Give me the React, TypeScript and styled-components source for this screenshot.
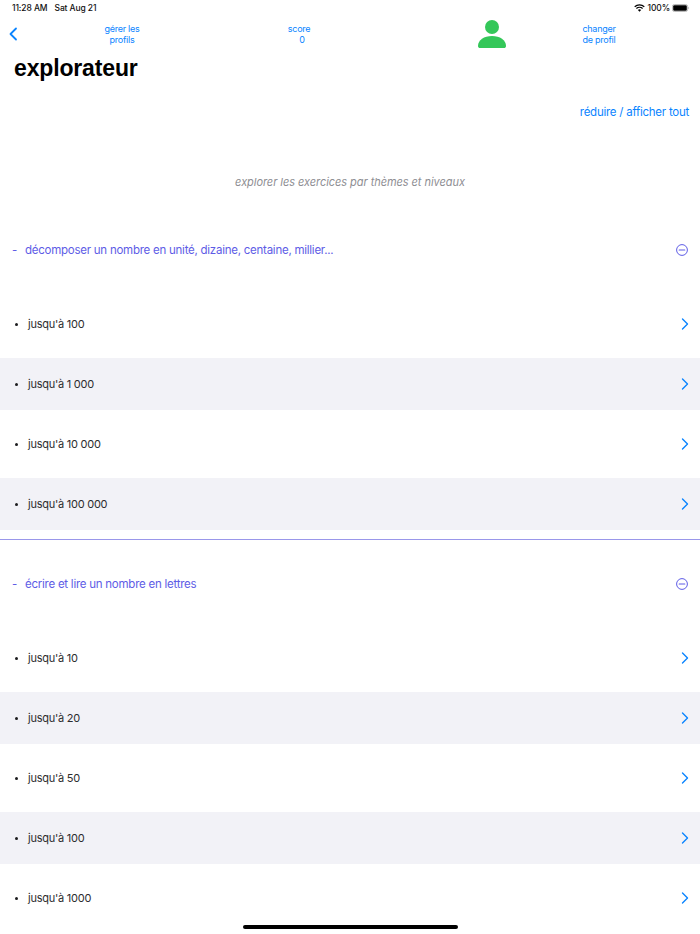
import React from "react";
import styled, { createGlobalStyle } from "styled-components";

const GlobalStyle = createGlobalStyle`
  html, body {
    margin: 0;
    padding: 0;
    background: #ffffff;
    font-family: Inter, "Liberation Sans", sans-serif;
  }
`;

const Page = styled.div`
  position: relative;
  width: 700px;
  height: 934px;
  overflow: hidden;
  background: #ffffff;
`;

const StatusBar = styled.div`
  height: 16px;
  padding: 0 10px 0 12px;
  display: flex;
  align-items: center;
  justify-content: space-between;
  font-size: 8.5px;
  font-weight: 500;
  letter-spacing: -0.1px;
  color: #111111;
`;

const StatusGroup = styled.div<{ $gap: number }>`
  display: flex;
  align-items: center;
  gap: ${(p) => p.$gap}px;
`;

const NavBar = styled.div`
  height: 33px;
  margin-top: 4px;
  display: grid;
  grid-template-columns: 74px 96px 258px 128px 86px 1fr;
  align-items: start;
`;

const BackButton = styled.div`
  padding: 7px 0 0 8px;
  display: flex;
`;

const NavLabel = styled.div`
  padding-top: 3px;
  font-size: 9px;
  line-height: 11px;
  letter-spacing: -0.25px;
  color: #0a84ff;
  text-align: center;
`;

const ScoreValue = styled.span`
  margin-left: 6px;
`;

const ProfileIcon = styled.div`
  display: flex;
  justify-content: center;
`;

const Title = styled.h1`
  margin: 0;
  padding: 0 0 0 14px;
  font-family: "Liberation Sans", Arial, sans-serif;
  font-size: 23px;
  line-height: 30px;
  font-weight: 700;
  letter-spacing: -0.15px;
  color: #000000;
`;

const ToggleAll = styled.div`
  margin-top: 21px;
  padding-right: 11px;
  text-align: right;
  font-size: 11.5px;
  line-height: 16px;
  letter-spacing: -0.25px;
  color: #0a84ff;
`;

const Subtitle = styled.div`
  margin-top: 54px;
  text-align: center;
  font-size: 11px;
  line-height: 16px;
  font-style: italic;
  letter-spacing: -0.05px;
  color: #8e8e93;
`;

const SectionHeader = styled.div<{ $top: number }>`
  margin-top: ${(p) => p.$top}px;
  margin-bottom: 20px;
  height: 40px;
  padding: 0 12px;
  display: flex;
  align-items: center;
  font-size: 11.5px;
  letter-spacing: -0.25px;
  color: #5e5ce6;
`;

const Dash = styled.span`
  width: 13px;
`;

const HeaderText = styled.span`
  flex: 1;
`;

const List = styled.div`
  display: flex;
  flex-direction: column;
`;

const Row = styled.div<{ $shaded: boolean }>`
  height: ${(p) => (p.$shaded ? 52 : 68)}px;
  padding: 0 11px 0 15px;
  display: flex;
  align-items: center;
  background: ${(p) => (p.$shaded ? "#f2f2f7" : "#ffffff")};
  font-size: 11px;
  letter-spacing: -0.25px;
  color: #2c2c2e;
`;

const Bullet = styled.span`
  width: 3px;
  height: 3px;
  margin-right: 10px;
  border-radius: 50%;
  background: #1c1c1e;
`;

const RowLabel = styled.span`
  flex: 1;
`;

const Divider = styled.div`
  height: 1px;
  margin-top: 9px;
  background: #9a97ea;
`;

const HomeIndicator = styled.div`
  position: absolute;
  left: 243px;
  bottom: 5px;
  width: 215px;
  height: 4px;
  border-radius: 2px;
  background: #000000;
`;

const Chevron = () => (
  <svg width="8" height="12" viewBox="0 0 8 12" fill="none">
    <path d="M1.5 1 L6.5 6 L1.5 11" stroke="#0a84ff" strokeWidth="1.4" strokeLinecap="round" strokeLinejoin="round" />
  </svg>
);

const MinusCircle = () => (
  <svg width="12" height="12" viewBox="0 0 12 12" fill="none">
    <circle cx="6" cy="6" r="5.4" stroke="#5e5ce6" strokeWidth="1" />
    <path d="M3.2 6 H8.8" stroke="#5e5ce6" strokeWidth="1.1" strokeLinecap="round" />
  </svg>
);

const Wifi = () => (
  <svg width="11" height="8" viewBox="0 0 11 8" fill="none">
    <path d="M0.7 2.8 A7 7 0 0 1 10.3 2.8" stroke="#000" strokeWidth="1.2" />
    <path d="M2.4 4.5 A4.5 4.5 0 0 1 8.6 4.5" stroke="#000" strokeWidth="1.2" />
    <path d="M3.9 6 L5.5 7.8 L7.1 6 A2.3 2.3 0 0 0 3.9 6 Z" fill="#000" />
  </svg>
);

const Battery = () => (
  <svg width="18" height="8" viewBox="0 0 18 8" fill="none">
    <rect x="0.4" y="0.5" width="15.2" height="7" rx="2" stroke="#aaaaaa" strokeWidth="0.8" />
    <rect x="1.2" y="1.3" width="13.6" height="5.4" rx="1.2" fill="#000" />
    <path d="M16.4 2.8 C17.4 3 17.4 5 16.4 5.2 Z" fill="#aaaaaa" />
  </svg>
);

const sections = [
  {
    title: "décomposer un nombre en unité, dizaine, centaine, millier...",
    top: 40,
    rows: ["jusqu'à 100", "jusqu'à 1 000", "jusqu'à 10 000", "jusqu'à 100 000"],
  },
  {
    title: "écrire et lire un nombre en lettres",
    top: 24,
    rows: ["jusqu'à 10", "jusqu'à 20", "jusqu'à 50", "jusqu'à 100", "jusqu'à 1000"],
  },
];

const App = () => {
  return (
    <Page>
      <GlobalStyle />
      <StatusBar>
        <StatusGroup $gap={7}>
          <span>11:28 AM</span>
          <span>Sat Aug 21</span>
        </StatusGroup>
        <StatusGroup $gap={2}>
          <Wifi />
          <span>100%</span>
          <Battery />
        </StatusGroup>
      </StatusBar>
      <NavBar>
        <BackButton>
          <svg width="10" height="14" viewBox="0 0 10 14" fill="none">
            <path d="M8 1.5 L2.5 7 L8 12.5" stroke="#0a84ff" strokeWidth="1.8" strokeLinecap="round" strokeLinejoin="round" />
          </svg>
        </BackButton>
        <NavLabel>gérer les<br />profils</NavLabel>
        <NavLabel>score<br /><ScoreValue>0</ScoreValue></NavLabel>
        <ProfileIcon>
          <svg width="28" height="28" viewBox="0 0 28 28">
            <circle cx="14" cy="7" r="7" fill="#34c759" />
            <path d="M0 26 C0 20 6 16 14 16 C22 16 28 20 28 26 C28 27.4 27 28 26 28 H2 C1 28 0 27.4 0 26 Z" fill="#34c759" />
          </svg>
        </ProfileIcon>
        <NavLabel>changer<br />de profil</NavLabel>
      </NavBar>
      <Title>explorateur</Title>
      <ToggleAll>réduire / afficher tout</ToggleAll>
      <Subtitle>explorer les exercices par thèmes et niveaux</Subtitle>
      {sections.map((section, s) => (
        <React.Fragment key={section.title}>
          {s > 0 && <Divider />}
          <SectionHeader $top={section.top}>
            <Dash>-</Dash>
            <HeaderText>{section.title}</HeaderText>
            <MinusCircle />
          </SectionHeader>
          <List>
            {section.rows.map((label, i) => (
              <Row key={label} $shaded={i % 2 === 1}>
                <Bullet />
                <RowLabel>{label}</RowLabel>
                <Chevron />
              </Row>
            ))}
          </List>
        </React.Fragment>
      ))}
      <HomeIndicator />
    </Page>
  );
};

export default App;
